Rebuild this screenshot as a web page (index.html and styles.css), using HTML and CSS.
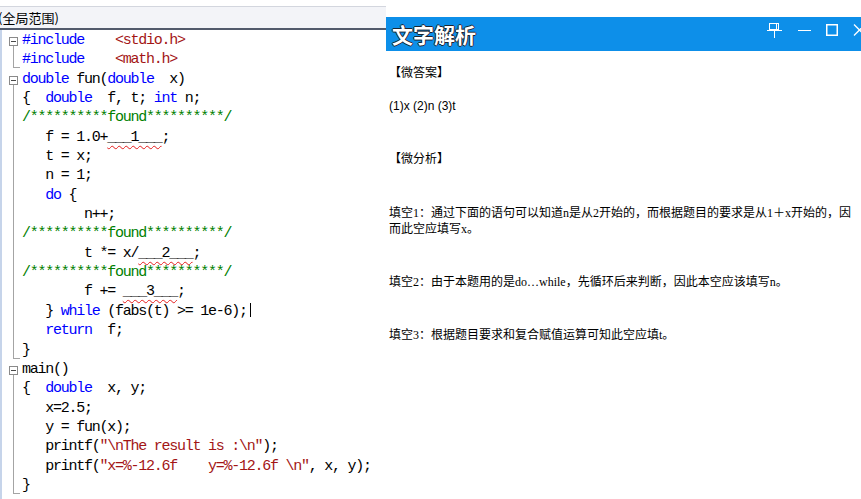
FILE: index.html
```html
<!DOCTYPE html>
<html lang="zh-CN">

<head>
    <meta charset="UTF-8">
    <meta name="viewport" content="width=device-width, initial-scale=1.0">
    <title>文字解析</title>
    <link rel="stylesheet" href="styles.css">
</head>

<body>
    <div class="editor">
        <div class="scope-bar"><span class="scope">(全局范围)</span></div>
        <div class="code">
            <div class="ln"><span class="g fold"><span class="box"></span></span><span class="c"><span class="kw">#include</span>    <span class="str">&lt;stdio.h&gt;</span></span></div>
            <div class="ln"><span class="g end"></span><span class="c"><span class="kw">#include</span>    <span class="str">&lt;math.h&gt;</span></span></div>
            <div class="ln"><span class="g fold"><span class="box"></span></span><span class="c"><span class="kw">double</span> fun(<span class="kw">double</span>  x)</span></div>
            <div class="ln"><span class="g line"></span><span class="c">{  <span class="kw">double</span>  f, t; <span class="kw">int</span> n;</span></div>
            <div class="ln"><span class="g line"></span><span class="c"><span class="cm">/**********found**********/</span></span></div>
            <div class="ln"><span class="g line"></span><span class="c">   f = 1.0+<span class="blank">___1___</span>;</span></div>
            <div class="ln"><span class="g line"></span><span class="c">   t = x;</span></div>
            <div class="ln"><span class="g line"></span><span class="c">   n = 1;</span></div>
            <div class="ln"><span class="g line"></span><span class="c">   <span class="kw">do</span> {</span></div>
            <div class="ln"><span class="g line"></span><span class="c">        n++;</span></div>
            <div class="ln"><span class="g line"></span><span class="c"><span class="cm">/**********found**********/</span></span></div>
            <div class="ln"><span class="g line"></span><span class="c">        t *= x/<span class="blank">___2___</span>;</span></div>
            <div class="ln"><span class="g line"></span><span class="c"><span class="cm">/**********found**********/</span></span></div>
            <div class="ln"><span class="g line"></span><span class="c">        f += <span class="blank">___3___</span>;</span></div>
            <div class="ln"><span class="g line"></span><span class="c">   } <span class="kw">while</span> (fabs(t) &gt;= 1e-6);<span class="caret"></span></span></div>
            <div class="ln"><span class="g line"></span><span class="c">   <span class="kw">return</span>  f;</span></div>
            <div class="ln"><span class="g end"></span><span class="c">}</span></div>
            <div class="ln"><span class="g fold"><span class="box"></span></span><span class="c">main()</span></div>
            <div class="ln"><span class="g line"></span><span class="c">{  <span class="kw">double</span>  x, y;</span></div>
            <div class="ln"><span class="g line"></span><span class="c">   x=2.5;</span></div>
            <div class="ln"><span class="g line"></span><span class="c">   y = fun(x);</span></div>
            <div class="ln"><span class="g line"></span><span class="c">   printf(<span class="str">"\nThe result is :\n"</span>);</span></div>
            <div class="ln"><span class="g line"></span><span class="c">   printf(<span class="str">"x=%-12.6f    y=%-12.6f \n"</span>, x, y);</span></div>
            <div class="ln"><span class="g end"></span><span class="c">}</span></div>
        </div>
    </div>

    <div class="panel">
        <div class="titlebar">
            <span class="title">文字解析</span>
            <div class="tb-icons">
                <svg class="ic-pin" width="17" height="16" viewBox="0 0 17 16">
                    <rect x="3.5" y="1.5" width="9" height="6" fill="none" stroke="#fff" />
                    <line x1="10.5" y1="1.5" x2="10.5" y2="7.5" stroke="#fff" />
                    <line x1="1" y1="8.5" x2="16" y2="8.5" stroke="#fff" />
                    <line x1="8.5" y1="8.5" x2="8.5" y2="16" stroke="#fff" />
                </svg>
                <svg class="ic-min" width="13" height="13" viewBox="0 0 13 13">
                    <line x1="0" y1="6.5" x2="13" y2="6.5" stroke="#fff" />
                </svg>
                <svg class="ic-max" width="12" height="12" viewBox="0 0 12 12">
                    <rect x="0.75" y="0.75" width="10.5" height="10.5" fill="none" stroke="#fff" stroke-width="1.5" />
                </svg>
                <svg class="ic-close" width="14" height="12" viewBox="0 0 14 12">
                    <line x1="1" y1="0.5" x2="12" y2="11.5" stroke="#fff" stroke-width="1.3" />
                    <line x1="12" y1="0.5" x2="1" y2="11.5" stroke="#fff" stroke-width="1.3" />
                </svg>
            </div>
        </div>
        <div class="content">
            <p class="label">【微答案】</p>
            <p class="answer">(1)x (2)n (3)t</p>
            <p class="label section">【微分析】</p>
            <p class="fill first">填空1：通过下面的语句可以知道n是从2开始的，而根据题目的要求是从1＋x开始的，因而此空应填写x。</p>
            <p class="fill">填空2：由于本题用的是do…while，先循环后来判断，因此本空应该填写n。</p>
            <p class="fill">填空3：根据题目要求和复合赋值运算可知此空应填t。</p>
        </div>
    </div>
</body>

</html>
```

FILE: styles.css
```css
* {
    padding: 0;
    margin: 0;
    box-sizing: border-box;
}

body {
    width: 861px;
    height: 499px;
    overflow: hidden;
    display: flex;
    background: #fff;
}

/* left: code editor */
.editor {
    width: 386px;
    flex: none;
    display: flex;
    flex-direction: column;
    padding-top: 6px;
}

.scope-bar {
    height: 24px;
    border-top: 1px solid #d3d6de;
    border-bottom: 2px solid #525a6c;
    background: #f3f4f8;
    display: flex;
    align-items: center;
    overflow: hidden;
}

.scope {
    margin-left: -2px;
    font-family: "Noto Sans CJK SC", sans-serif;
    font-size: 13px;
    color: #000;
}

.code {
    flex: 1;
    border-left: 2px solid #c6d4ea;
    padding-top: 1px;
    font-family: "Liberation Mono", monospace;
    font-size: 15px;
    letter-spacing: -1.25px;
    color: #000;
}

.ln {
    display: flex;
    height: 19.35px;
    line-height: 19.35px;
}

.c {
    white-space: pre;
}

.kw {
    color: #0000ff;
}

.str {
    color: #a31515;
}

.cm {
    color: #008000;
}

.blank {
    text-decoration: underline wavy #e51c1c;
    text-decoration-thickness: 1px;
    text-underline-offset: 4px;
}

.caret {
    display: inline-block;
    width: 1px;
    height: 14px;
    margin-left: 3px;
    background: #000;
    vertical-align: -2px;
}

/* fold gutter */
.g {
    width: 20px;
    flex: none;
}

.g.line {
    background: linear-gradient(#a4a4a4, #a4a4a4) 11px 0 / 1px 100% no-repeat;
}

.g.end {
    background:
        linear-gradient(#a4a4a4, #a4a4a4) 11px 0 / 1px 17px no-repeat,
        linear-gradient(#a4a4a4, #a4a4a4) 11px 17px / 7px 1px no-repeat;
}

.g.fold {
    padding: 6px 0 0 7px;
    background: linear-gradient(#a4a4a4, #a4a4a4) 11px 15px / 1px 100% no-repeat;
}

.box {
    display: block;
    width: 9px;
    height: 9px;
    border: 1px solid #8a8a8a;
    background: linear-gradient(#4a4a4a, #4a4a4a) center / 5px 1px no-repeat, #fff;
}

/* right: analysis panel */
.panel {
    flex: 1;
    padding-top: 17px;
    display: flex;
    flex-direction: column;
}

.titlebar {
    height: 34px;
    background: #0d8fe9;
    display: flex;
    align-items: center;
    overflow: hidden;
}

.title {
    padding-left: 6px;
    font-family: "Noto Sans CJK SC", sans-serif;
    font-size: 21px;
    font-weight: 700;
    color: #fff;
    text-shadow: 1px 0 0 #1c2430, -1px 0 0 #1c2430, 0 1px 0 #1c2430, 0 -1px 0 #1c2430;
}

.tb-icons {
    margin-left: auto;
    margin-right: -6px;
    padding-bottom: 8px;
    display: flex;
    align-items: center;
    gap: 15px;
}

.tb-icons svg {
    display: block;
}

.content {
    padding: 13px 6px 0 3px;
    font-size: 12px;
    line-height: 16px;
    color: #000;
}

.label {
    font-family: "Noto Sans CJK SC", sans-serif;
}

.answer {
    margin-top: 18px;
    font-family: "Liberation Sans", "Noto Sans CJK SC", sans-serif;
}

.section {
    margin-top: 36px;
}

.fill {
    margin-top: 37px;
    font-family: "Liberation Serif", "Noto Sans CJK SC", serif;
}

.fill.first {
    margin-top: 39px;
}
```
